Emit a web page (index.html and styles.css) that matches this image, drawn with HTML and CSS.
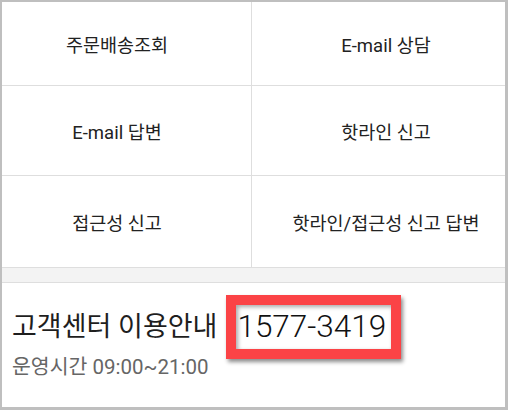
FILE: index.html
```html
<!DOCTYPE html>
<html lang="ko">
<head>
  <meta charset="UTF-8">
  <meta name="viewport" content="width=device-width, initial-scale=1.0">
  <title>고객센터</title>
  <link rel="stylesheet" href="styles.css">
</head>
<body>
  <div class="frame">
    <ul class="menu">
      <li class="cell row1 left">주문배송조회</li>
      <li class="cell row1 right">E-mail 상담</li>
      <li class="cell row2 left">E-mail 답변</li>
      <li class="cell row2 right">핫라인 신고</li>
      <li class="cell row3 left">접근성 신고</li>
      <li class="cell row3 right">핫라인/접근성 신고 답변</li>
    </ul>

    <div class="gap"></div>

    <div class="info">
      <h2 class="info-title">고객센터 이용안내 <span class="tel">1577-3419</span></h2>
      <p class="info-time">운영시간 09:00~21:00</p>
    </div>
  </div>
</body>
</html>
```

FILE: styles.css
```css
/* Global Styles */
* {
  margin: 0;
  padding: 0;
  box-sizing: border-box;
}

body {
  background: #ffffff;
  font-family: Roboto, "Noto Sans CJK KR", sans-serif;
  color: #222;
}

.frame {
  width: 508px;
  height: 410px;
  border-style: solid;
  border-color: #bfbfbf;
  border-width: 2px 3px 3px 2px;
  display: flex;
  flex-direction: column;
}

.menu {
  list-style: none;
  display: grid;
  grid-template-columns: 250px 1fr;
  grid-template-rows: 84px 90px 92px;
}

.cell {
  display: flex;
  align-items: center;
  justify-content: center;
  font-size: 18.5px;
  border-bottom: 1px solid #dedede;
}

.cell.left {
  border-right: 1px solid #dedede;
  padding-right: 19px;
}

.cell.right {
  padding-left: 15px;
}

.gap {
  height: 15px;
  background: #f3f3f3;
  border-bottom: 1px solid #dedede;
}

.info {
  flex: 1;
  padding: 22px 10px 0;
}

.info-title {
  display: flex;
  align-items: center;
  gap: 20px;
  font-size: 27px;
  font-weight: normal;
  line-height: 44px;
  color: #1e1e1e;
}

.tel {
  position: relative;
  font-size: 31.5px;
  font-weight: 300;
  color: #111;
}

/* red highlight drawn over the number */
.tel::after {
  content: "";
  position: absolute;
  left: -11px;
  right: -15px;
  top: -10px;
  bottom: -10px;
  border: 10px solid #fb4346;
  box-shadow: 2px 3px 4px rgba(0, 0, 0, 0.45), inset 2px 2px 4px rgba(0, 0, 0, 0.35);
}

.info-time {
  font-size: 20.5px;
  color: #666;
  margin-top: 1px;
}
```
